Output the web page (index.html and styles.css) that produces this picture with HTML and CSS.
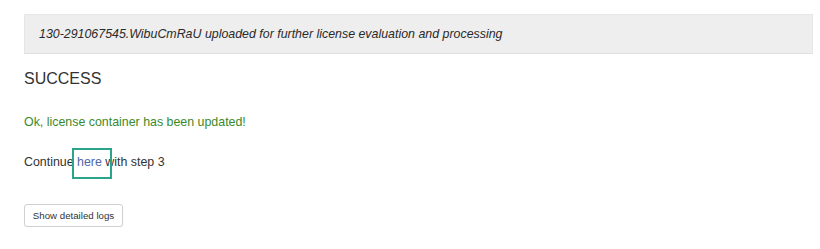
FILE: index.html
```html
<!DOCTYPE html>
<html>
<head>
<meta charset="utf-8">
<link rel="stylesheet" href="styles.css">
</head>
<body>
<div class="page">
  <div class="well"><em>130-291067545.WibuCmRaU uploaded for further license evaluation and processing</em></div>
  <h3 class="status">SUCCESS</h3>
  <p class="ok">Ok, license container has been updated!</p>
  <p class="next">Continue <span class="hl"><a href="#" class="link">here</a></span> with step 3</p>
  <button class="btn">Show detailed logs</button>
</div>
</body>
</html>
```
FILE: styles.css
```css
html, body {
  margin: 0;
  padding: 0;
  background: #ffffff;
}
body {
  font-family: "Liberation Sans", Arial, sans-serif;
  color: #333333;
}
.page {
  padding: 14px 7px 0 24px;
}
.well {
  height: 40px;
  box-sizing: border-box;
  background: #eeeeee;
  border: 1px solid #e6e6e6;
  border-bottom-color: #e0e0e0;
  padding: 0 0 0 14px;
  display: flex;
  align-items: center;
  font-size: 12.4px;
  color: #2a2a2a;
}
.well em {
  font-style: italic;
}
.status {
  margin: 16px 0 0 0;
  font-size: 16px;
  font-weight: normal;
  line-height: 18px;
  color: #333333;
}
.ok {
  margin: 26px 0 0 0;
  font-size: 12.4px;
  line-height: 16px;
  color: #3a8a2c;
}
.next {
  margin: 24px 0 0 0;
  font-size: 12.4px;
  line-height: 16px;
  color: #333333;
}
.hl {
  position: relative;
}
.hl::after {
  content: "";
  position: absolute;
  left: -5px;
  right: -10px;
  top: -7px;
  bottom: -10px;
  border: 2px solid #2aa58c;
}
.link {
  color: #5068a8;
  text-decoration: none;
}
.btn {
  margin-top: 34px;
  width: 99px;
  height: 23px;
  padding: 0;
  background: #ffffff;
  border: 1px solid #d0d0d0;
  border-radius: 3px;
  font-family: "Liberation Sans", Arial, sans-serif;
  font-size: 9.7px;
  color: #333333;
  box-shadow: 0 1px 1px rgba(0,0,0,0.05);
}
```
